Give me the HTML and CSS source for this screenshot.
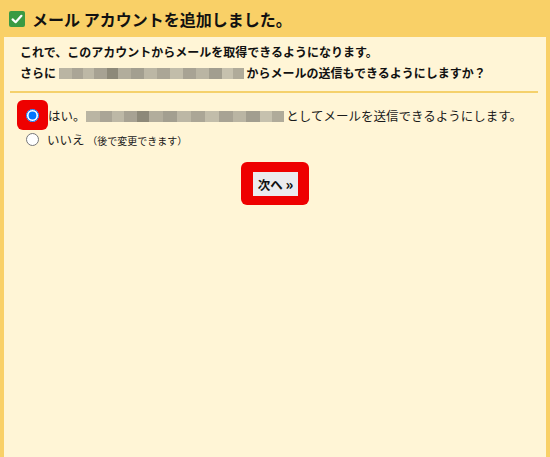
FILE: index.html
```html
<!DOCTYPE html>
<html lang="ja">
<head>
  <meta charset="UTF-8" />
  <meta name="viewport" content="width=device-width, initial-scale=1.0">
  <title>メール アカウントを追加しました。</title>
  <link rel="stylesheet" href="styles.css">
</head>
<body>

  <div class="top-bar">
    <svg class="check-icon" width="16" height="16" viewBox="0 0 16 16">
      <rect x="0" y="0" width="16" height="16" rx="2" fill="#3b9a43"/>
      <path d="M3.6 8.4 L6.6 11.2 L12.4 4.8" fill="none" stroke="#fff" stroke-width="2.2" stroke-linecap="round" stroke-linejoin="round"/>
    </svg>
    <h2>メール アカウントを追加しました。</h2>
  </div>

  <div class="panel">
    <div class="intro">
      <p>これで、このアカウントからメールを取得できるようになります。</p>
      <p>さらに <span class="blur blur-addr"></span> からメールの送信もできるようにしますか？</p>
    </div>

    <div class="rule"></div>

    <div class="choices">
      <div class="choice">
        <span class="mark"><input type="radio" name="send" checked></span>
        <span class="choice-text">はい。<span class="blur blur-name"></span> としてメールを送信できるようにします。</span>
      </div>
      <div class="choice choice-no">
        <input type="radio" name="send">
        <span class="choice-text">いいえ <small>（後で変更できます）</small></span>
      </div>
    </div>

    <div class="actions">
      <span class="mark mark-btn"><button class="next-btn">次へ <b>&raquo;</b></button></span>
    </div>
  </div>

</body>
</html>
```

FILE: styles.css
```css
* {
  box-sizing: border-box;
  font-family: "Noto Sans CJK JP", "Noto Sans", sans-serif;
}

body {
  margin: 0;
  background: #fff5d6;
  color: #1a1a1a;
  min-height: 100vh;
  display: flex;
  flex-direction: column;
}

.top-bar {
  background-color: #f9d067;
  height: 37px;
  padding: 0 9px;
  display: flex;
  align-items: center;
  gap: 7px;
  flex-shrink: 0;
}

.check-icon {
  display: block;
  margin-top: 1px;
}

.top-bar h2 {
  margin: 0;
  font-size: 16px;
  font-weight: bold;
  color: #111;
}

.panel {
  flex: 1;
  border-left: 4px solid #f9d067;
  border-right: 4px solid #f9d067;
  background: #fff5d6;
}

.intro {
  padding: 4px 12px 0 16px;
}

.intro p {
  margin: 0;
  font-size: 12px;
  font-weight: bold;
  line-height: 21px;
  color: #111;
}

/* pixelated mosaic over the hidden address */
.blur {
  display: inline-block;
  vertical-align: middle;
  height: 11px;
  background: linear-gradient(to right,
    #bab5a3 0 7%, #aaa596 7% 13%, #bdb8a6 13% 19%, #a7a293 19% 26%,
    #8d8979 26% 32%, #b2ad9c 32% 39%, #a39f90 39% 46%, #bcb7a5 46% 53%,
    #aba696 53% 60%, #c2bdaa 60% 67%, #a8a394 67% 74%, #bab5a3 74% 81%,
    #a29e8f 81% 88%, #c6c1ae 88% 94%, #b0ab9a 94% 100%);
}

.blur-addr {
  width: 185px;
  margin: -2px 0 0;
}

.blur-name {
  width: 198px;
  margin: -2px 0 0;
}

.rule {
  height: 2px;
  margin: 8px 8px 0 6px;
  background: #f5d16c;
}

.choices {
  padding: 7px 0 0 13px;
}

.choice {
  display: flex;
  align-items: center;
}

.choice-text {
  font-size: 12.5px;
  color: #1a1a1a;
}

.choice-text small {
  font-size: 10px;
}

.mark {
  display: inline-flex;
  background: #ee0000;
  border-radius: 6px;
}

.choice .mark {
  width: 31px;
  height: 30px;
  align-items: center;
  justify-content: center;
}

input[type="radio"] {
  margin: 0;
  width: 13px;
  height: 13px;
}

.choice-no {
  margin-top: 0;
  padding-left: 9px;
}

.choice-no input[type="radio"] {
  margin-right: 8px;
}

.actions {
  display: flex;
  justify-content: center;
  margin-top: 13px;
}

.mark-btn {
  padding: 10px 11px 9px 12px;
}

.next-btn {
  margin: 0;
  padding: 0 5px;
  height: 24px;
  border: none;
  border-radius: 0;
  background: #ebebee;
  font-size: 12.5px;
  font-weight: bold;
  color: #111;
  cursor: pointer;
}

.next-btn b {
  font-size: 14px;
}
```
